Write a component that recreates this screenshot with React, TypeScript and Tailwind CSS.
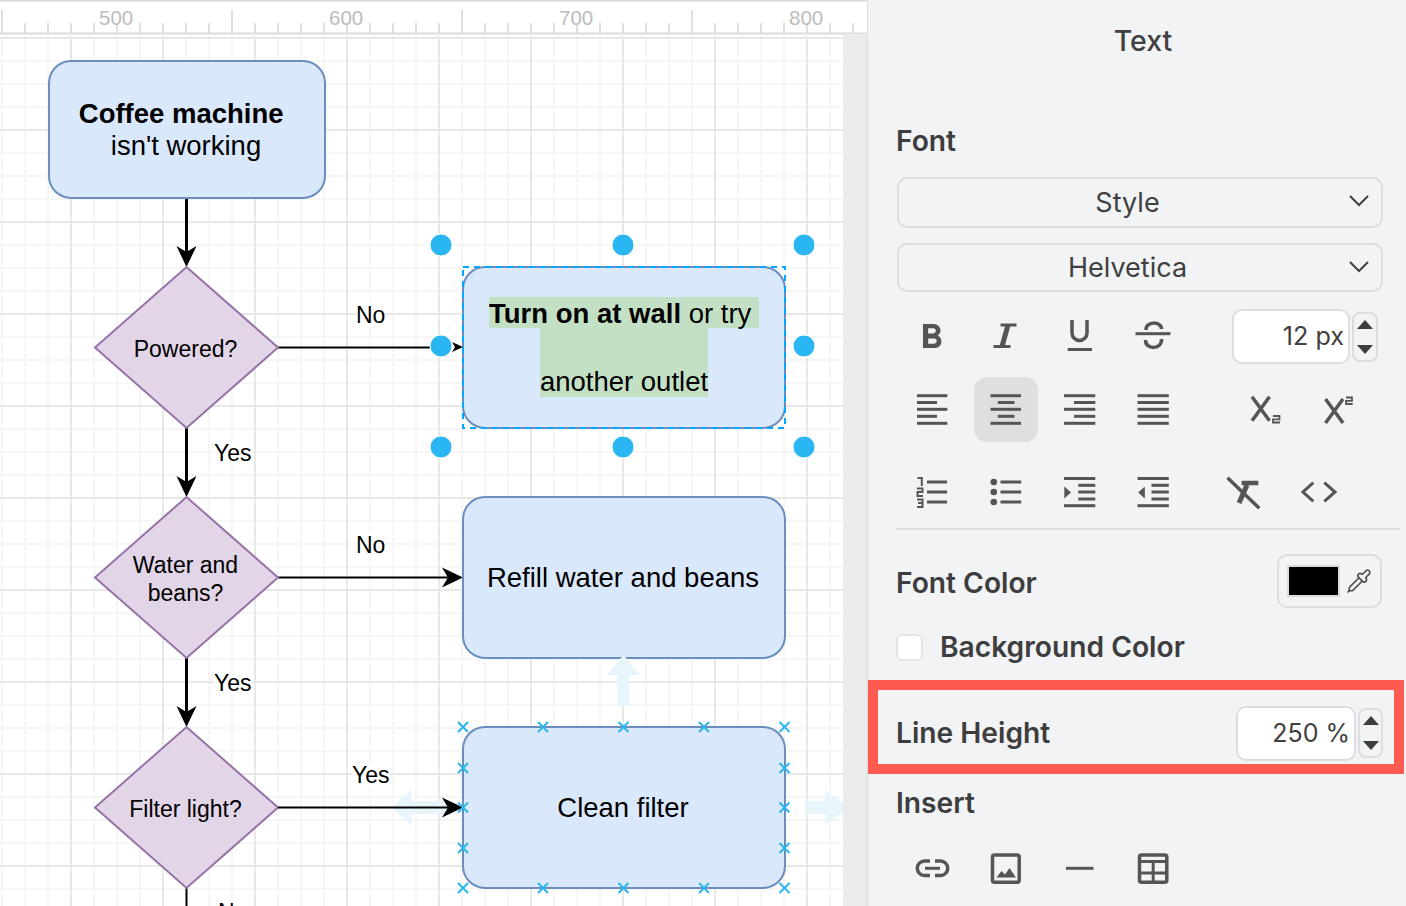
import { Pipette } from 'lucide-react';
import type { ReactNode } from 'react';

const range = (n: number) => Array.from({ length: n }, (_, i) => i);

const Grid = () => (
  <svg className="absolute left-0 top-0" width={867} height={906}>
    {range(37).map((i) => (
      <line key={i} x1={2 + i * 23} x2={2 + i * 23} y1={35} y2={906} stroke="#f6f6f6" strokeWidth={2} />
    ))}
    {range(38).map((i) => (
      <line key={i} x1={0} x2={843} y1={38 + i * 23} y2={38 + i * 23} stroke="#f6f6f6" strokeWidth={2} />
    ))}
    {range(9).map((i) => (
      <line key={i} x1={71 + i * 92} x2={71 + i * 92} y1={35} y2={906} stroke="#e8e8e8" strokeWidth={2} />
    ))}
    {range(10).map((i) => (
      <line key={i} x1={0} x2={843} y1={38 + i * 92} y2={38 + i * 92} stroke="#e8e8e8" strokeWidth={2} />
    ))}
  </svg>
);

const Ruler = () => (
  <div className="absolute left-0 top-0 h-[36px] w-[867px] bg-white">
    <svg className="absolute left-0 top-0" width={867} height={36}>
      <line x1={0} x2={867} y1={0.5} y2={0.5} stroke="#d8d8d8" strokeWidth={2} />
      <line x1={0} x2={867} y1={33.5} y2={33.5} stroke="#dcdcdc" strokeWidth={2} />
      {range(38).map((i) => {
        const x = 2 + i * 23;
        return <line key={i} x1={x} x2={x} y1={i % 10 === 0 ? 10 : 23} y2={33} stroke="#d6d6d6" strokeWidth={1.5} />;
      })}
    </svg>
    <span className="absolute left-[99px] top-[6px] text-[20.5px] leading-[24px] text-[#bdbdbd]">500</span>
    <span className="absolute left-[329px] top-[6px] text-[20.5px] leading-[24px] text-[#bdbdbd]">600</span>
    <span className="absolute left-[559px] top-[6px] text-[20.5px] leading-[24px] text-[#bdbdbd]">700</span>
    <span className="absolute left-[789px] top-[6px] text-[20.5px] leading-[24px] text-[#bdbdbd]">800</span>
  </div>
);

const Arrow = ({ x, y, dir }: { x: number; y: number; dir: 'down' | 'right' }) => (
  <path
    d="M0 0 L-21 -10 L-15 0 L-21 10 Z"
    transform={`translate(${x} ${y}) rotate(${dir === 'down' ? 90 : 0})`}
    fill="#000"
  />
);

const Edges = () => (
  <svg className="absolute left-0 top-0" width={867} height={906}>
    <g stroke="#000" strokeWidth={3}>
      <line x1={186.5} x2={186.5} y1={198} y2={255} />
      <line x1={186.5} x2={186.5} y1={428} y2={485} />
      <line x1={186.5} x2={186.5} y1={658} y2={715} />
      <line x1={186.5} x2={186.5} y1={888} y2={906} strokeWidth={2} />
      <line x1={278} x2={430} y1={347.5} y2={347.5} strokeWidth={2} />
      <line x1={278} x2={450} y1={577.5} y2={577.5} strokeWidth={2} />
    </g>
    <Arrow x={186.5} y={267} dir="down" />
    <Arrow x={186.5} y={497} dir="down" />
    <Arrow x={186.5} y={727} dir="down" />
    <Arrow x={463} y={577.5} dir="right" />
  </svg>
);

const Diamond = ({ top }: { top: number }) => (
  <polygon
    points={`186.5,${top} 278,${top + 80.5} 186.5,${top + 161} 95,${top + 80.5}`}
    fill="#e1d5e7"
    stroke="#9673a6"
    strokeWidth={2}
  />
);

const Box = ({ className, children }: { className: string; children?: ReactNode }) => (
  <div
    className={`absolute flex items-center justify-center rounded-[23px] border-2 border-[#6c8ebf] bg-[#dae8fc] text-center text-[27.5px] leading-[32px] text-black ${className}`}
  >
    {children}
  </div>
);

const Label = ({ className, children }: { className: string; children: ReactNode }) => (
  <span className={`absolute bg-white text-[23px] leading-[24px] text-black ${className}`}>{children}</span>
);

const DiamondText = ({ className, children }: { className: string; children: ReactNode }) => (
  <div className={`absolute left-[95px] w-[181px] text-center text-[23px] leading-[27.6px] text-black ${className}`}>
    {children}
  </div>
);

const crossPoints: [number, number][] = [
  ...[463, 543, 623.5, 704, 784.5].flatMap((x): [number, number][] => [
    [x, 727],
    [x, 888],
  ]),
  ...[768, 807.5, 848].flatMap((y): [number, number][] => [
    [463, y],
    [784.5, y],
  ]),
];

const Selection = () => (
  <svg className="absolute left-0 top-0" width={867} height={906}>
    {/* hover arrows round the clean filter box */}
    <g fill="#e8f6fc">
      <path d="M623.5 655 L640 675 L629.5 675 L629.5 706 L617.5 706 L617.5 675 L607 675 Z" />
      <path d="M391 807.5 L411 790 L411 801 L450 801 L450 814 L411 814 L411 825 Z" />
      <path d="M805 801 L825 801 L825 790 L843 803 L843 812 L825 825 L825 814 L805 814 Z" />
    </g>
    <line x1={278} x2={450} y1={807.5} y2={807.5} stroke="#000" strokeWidth={2} />
    <Arrow x={463} y={807.5} dir="right" />
    <path d="M452 342 L463 347 L452 352 L455 347 Z" fill="#000" />
    <rect x={463} y={267} width={322} height={161} fill="none" stroke="#00a8ff" strokeWidth={2} strokeDasharray="6 5" />
    {[441, 623, 804].flatMap((x) =>
      [245, 346, 447]
        .filter((y) => !(x === 623 && y === 346))
        .map((y) => <circle key={`${x}-${y}`} cx={x} cy={y} r={11} fill="#29b6f2" stroke="#fff" strokeWidth={1} />),
    )}
    <g stroke="#29b6f2" strokeWidth={2}>
      {crossPoints.map(([x, y]) => (
        <path key={`${x}-${y}`} d={`M${x - 5} ${y - 5} L${x + 5} ${y + 5} M${x - 5} ${y + 5} L${x + 5} ${y - 5}`} />
      ))}
    </g>
  </svg>
);

const Canvas = () => (
  <div className="relative h-[906px] w-[867px] flex-none overflow-hidden bg-white font-['Liberation_Sans',sans-serif]">
    <Grid />
    <Ruler />
    <div className="absolute left-[843px] top-[34px] h-[872px] w-[24px] bg-[#ebebeb]" />
    <Edges />
    <svg className="absolute left-0 top-0" width={867} height={906}>
      <Diamond top={267} />
      <Diamond top={497} />
      <Diamond top={727} />
    </svg>
    <Box className="left-[48px] top-[60px] h-[139px] w-[278px] pr-[2px]">
      <div>
        <b className="mr-[2px]">Coffee machine&nbsp;</b>
        <br />
        isn't working
      </div>
    </Box>
    <Box className="left-[462px] top-[266px] h-[163px] w-[324px]">
      <div className="flex flex-col items-center pb-[2px]">
        <div className="h-[31px] whitespace-pre bg-[#c3e0c4] leading-[33px]">
          <b>Turn on at wall</b> or try{' '}
        </div>
        <div className="h-[69px] bg-[#c3e0c4] pt-[38px] leading-[31px]">another outlet</div>
      </div>
    </Box>
    <Box className="left-[462px] top-[496px] h-[163px] w-[324px] pr-[2px]">Refill water and beans</Box>
    <Box className="left-[462px] top-[726px] h-[163px] w-[324px] pr-[2px]">Clean filter</Box>
    <DiamondText className="top-[336px]">Powered?</DiamondText>
    <DiamondText className="top-[552px]">
      Water and
      <br />
      beans?
    </DiamondText>
    <DiamondText className="top-[796px]">Filter light?</DiamondText>
    <Label className="left-[356px] top-[303px]">No</Label>
    <Label className="left-[214px] top-[441px]">Yes</Label>
    <Label className="left-[356px] top-[533px]">No</Label>
    <Label className="left-[214px] top-[671px]">Yes</Label>
    <Label className="left-[352px] top-[763px]">Yes</Label>
    <Label className="left-[218px] top-[900px]">No</Label>
    <Selection />
  </div>
);

const ink = '#555555';

// icons are drawn in page coordinates through the viewBox
const Icon = ({ x, y, active, children }: { x: number; y: number; active?: boolean; children: ReactNode }) => (
  <div className={`h-[65px] w-[64px] flex-none rounded-[13px] ${active ? 'bg-[#dedfe1]' : ''}`}>
    <svg width={64} height={65} viewBox={`${x} ${y} 64 65`} fill={ink} stroke="none">
      {children}
    </svg>
  </div>
);

const Bar = ({ x1, x2, y, h = 3 }: { x1: number; x2: number; y: number; h?: number }) => (
  <rect x={x1} y={y - h / 2} width={x2 - x1} height={h} />
);

const Stroke = ({ d, w = 3.5 }: { d: string; w?: number }) => <path d={d} fill="none" stroke={ink} strokeWidth={w} />;

const alignRows = [395.7, 402.5, 409.3, 416.3, 423.3];

const AlignBars = ({ x1, x2, s1, s2 }: { x1: number; x2: number; s1: number; s2: number }) => (
  <>
    {alignRows.map((y, i) => (
      <Bar key={y} x1={i % 2 ? s1 : x1} x2={i % 2 ? s2 : x2} y={y} />
    ))}
  </>
);

const Stepper = ({ className }: { className: string }) => (
  <div className={`flex flex-none flex-col items-center justify-between rounded-[8px] border-2 border-[#dcdde0] px-[4px] py-[6px] ${className}`}>
    <div className="h-0 w-0 border-x-[8px] border-b-[9px] border-x-transparent border-b-[#3d3d3d]" />
    <div className="h-0 w-0 border-x-[8px] border-t-[9px] border-x-transparent border-t-[#3d3d3d]" />
  </div>
);

const Select = ({ label, className }: { label: string; className: string }) => (
  <div className={`relative ml-[1px] flex w-[486px] items-center justify-center rounded-[10px] border-2 border-[#dcdde0] pr-[25px] pt-[2px] text-[27px] text-[#404040] ${className}`}>
    {label}
    <svg className="absolute right-[12px] top-[16px]" width={20} height={12} viewBox="0 0 20 12">
      <path d="M1 1 L10 10 L19 1" fill="none" stroke="#404040" strokeWidth={2} />
    </svg>
  </div>
);

const Heading = ({ className, children }: { className: string; children: ReactNode }) => (
  <div className={`flex h-[40px] items-center text-[28.2px] font-semibold text-[#3d3d3d] ${className}`}>{children}</div>
);

const Panel = () => (
  <div className="h-[906px] flex-1 overflow-hidden border-l border-[#dcdcdc] bg-[#f1f3f5] font-['Inter',sans-serif]">
    <div className="flex h-[80px] items-center justify-center pl-[12px] pt-[2px] text-[28.5px] font-medium text-[#404040]">Text</div>
    <div className="pl-[28px]">
      <Heading className="mt-[41px] pt-[1px]">Font</Heading>
      <Select label="Style" className="mt-[16px] h-[51px]" />
      <Select label="Helvetica" className="mt-[15px] h-[49px]" />

      <div className="mt-[12px] flex h-[65px] items-center">
        <div className="ml-[4px] flex gap-[9.5px]">
          <Icon x={900} y={304}>
            <g transform="translate(911 317.1) scale(1.714)">
              <path d="M15.6 10.79c.97-.67 1.65-1.77 1.65-2.79 0-2.26-1.75-4-4-4H7v14h7.04c2.09 0 3.71-1.7 3.71-3.79 0-1.52-.86-2.82-2.15-3.42zM10 6.5h3c.83 0 1.5.67 1.5 1.5s-.67 1.5-1.5 1.5h-3v-3zm3.5 9H10v-3h3.5c.83 0 1.5.67 1.5 1.5s-.67 1.5-1.5 1.5z" />
            </g>
          </Icon>
          <Icon x={973.5} y={304}>
            <Bar x1={1000} x2={1016} y={325} />
            <Bar x1={993} x2={1010} y={346.5} />
            <Stroke d="M1007.5 325 L1001.5 346.5" w={5} />
          </Icon>
          <Icon x={1047} y={304}>
            <Stroke d="M1072 320 V333 A7.5 7.5 0 0 0 1087 333 V320" />
            <Bar x1={1067.7} x2={1092} y={349.5} />
          </Icon>
          <Icon x={1120.5} y={304}>
            <Bar x1={1135} x2={1170} y={333.7} />
            <Stroke d="M1145.5 330 C1145 321 1161 321 1161 329" />
            <Stroke d="M1161 339 C1162 350 1144.5 350 1145 340" />
          </Icon>
        </div>
        <div className="ml-[47.5px] flex h-[55px] w-[118px] flex-none items-center justify-end rounded-[10px] border-2 border-[#dcdde0] bg-white pr-[4px] text-[25.2px] text-[#404040]">
          12 px
        </div>
        <Stepper className="ml-[2px] h-[50px] w-[26px]" />
      </div>

      <div className="mt-[8px] flex h-[65px]">
        <div className="ml-[4px] flex gap-[9.5px]">
          <Icon x={900} y={377}>
            <AlignBars x1={917} x2={947.3} s1={917} s2={937} />
          </Icon>
          <Icon x={973.5} y={377} active>
            <AlignBars x1={990} x2={1020.5} s1={997.3} s2={1014} />
          </Icon>
          <Icon x={1047} y={377}>
            <AlignBars x1={1064} x2={1095.3} s1={1074} s2={1095.3} />
          </Icon>
          <Icon x={1120.5} y={377}>
            <AlignBars x1={1137} x2={1168.3} s1={1137} s2={1168.3} />
          </Icon>
        </div>
        <div className="ml-[48.5px] flex gap-[9px]">
          <Icon x={1233} y={377}>
            <Stroke d="M1252 396.7 L1269.5 420.7 M1269.5 396.7 L1252 420.7" />
            <Stroke d="M1273 416 H1279.5 V419.3 H1273 V422.5 H1280" w={1.8} />
          </Icon>
          <Icon x={1306} y={377}>
            <Stroke d="M1325.5 399 L1343 423 M1343 399 L1325.5 423" />
            <Stroke d="M1346 397.5 H1352 V400.8 H1346 V404 H1352.7" w={1.8} />
          </Icon>
        </div>
      </div>

      <div className="mt-[18px] flex h-[65px]">
        <div className="ml-[4px] flex gap-[9.5px]">
          <Icon x={900} y={460}>
            <Stroke d="M917.5 478 H921.8 V486" w={2} />
            <Stroke d="M917 488.5 H922.5 V492 H917.5 V496 H923" w={2} />
            <Stroke d="M917 499.5 H922.5 V503 H918 M922.5 503 V507 H917" w={2} />
            <Bar x1={927} x2={947} y={482} />
            <Bar x1={927} x2={947} y={492} />
            <Bar x1={927} x2={947} y={502} />
          </Icon>
          <Icon x={973.5} y={460}>
            {[482, 492, 502].map((y) => (
              <g key={y}>
                <circle cx={993.3} cy={y} r={3.3} />
                <Bar x1={1000} x2={1020.7} y={y} />
              </g>
            ))}
          </Icon>
          <Icon x={1047} y={460}>
            <Bar x1={1064} x2={1095.3} y={478.5} />
            <Bar x1={1078.3} x2={1095.3} y={485.3} />
            <Bar x1={1078.3} x2={1095.3} y={492} />
            <Bar x1={1078.3} x2={1095.3} y={499} />
            <Bar x1={1064} x2={1095.3} y={505.7} />
            <path d="M1064.3 486.5 L1071 492.5 L1064.3 498.5 Z" />
          </Icon>
          <Icon x={1120.5} y={460}>
            <Bar x1={1137} x2={1168.3} y={478.5} />
            <Bar x1={1151} x2={1168.3} y={485.3} />
            <Bar x1={1151} x2={1168.3} y={492} />
            <Bar x1={1151} x2={1168.3} y={499} />
            <Bar x1={1137} x2={1168.3} y={505.7} />
            <path d="M1144.3 486.5 L1137.7 492.5 L1144.3 498.5 Z" />
          </Icon>
        </div>
        <div className="ml-[28.5px] flex gap-[10px]">
          <Icon x={1213} y={460}>
            <Bar x1={1241.7} x2={1258.3} y={483} h={4.5} />
            <Stroke d="M1247 485 L1239 503" w={5} />
            <Stroke d="M1227.5 477.7 L1259.3 508.3" />
          </Icon>
          <Icon x={1287} y={460}>
            <Stroke d="M1313.3 482.7 L1303 492 L1313.3 501.3" w={3} />
            <Stroke d="M1324.3 482.7 L1335 492 L1324.3 501.3" w={3} />
          </Icon>
        </div>
      </div>

      <div className="mr-[6px] mt-[3px] h-[1.5px] bg-[#dcdde0]" />

      <div className="mt-[24.5px] flex h-[54px] items-center justify-between pr-[24px]">
        <div className="pt-[5px] text-[28.2px] font-semibold text-[#3d3d3d]">Font Color</div>
        <div className="flex h-[54px] w-[105px] items-center gap-[6px] rounded-[10px] border-2 border-[#dcdde0] pl-[8px]">
          <div className="h-[32px] w-[53px] border-2 border-[#dcdcdc] bg-black" />
          <Pipette size={26} strokeWidth={1.5} color="#505050" />
        </div>
      </div>

      <div className="mt-[26px] flex h-[27px] items-center">
        <div className="h-[27px] w-[27px] rounded-[6px] border-2 border-[#e3e4e6] bg-white" />
        <div className="ml-[17px] text-[28.2px] font-semibold text-[#3d3d3d]">Background Color</div>
      </div>
    </div>

    <div className="mt-[19px] flex h-[94px] w-[536px] items-center border-[10px] border-[#ff5a4f] pl-[18px] pr-[11px] pt-[12px]">
      <div className="flex-1 pt-[1px] text-[28.2px] font-semibold text-[#3d3d3d]">Line Height</div>
      <div className="flex h-[55px] w-[120px] flex-none items-center justify-end rounded-[10px] border-2 border-[#dcdde0] bg-white pr-[4px] pt-[1px] text-[25px] text-[#404040]">
        250 %
      </div>
      <Stepper className="ml-[2px] h-[50px] w-[25px]" />
    </div>

    <div className="pl-[28px]">
      <Heading className="mt-[9px]">Insert</Heading>
      <div className="ml-[4px] mt-[13px] flex gap-[9.5px]">
        <Icon x={900} y={836}>
          <Stroke d="M930 861 H924.5 A7 7 0 0 0 924.5 875.5 H930" />
          <Stroke d="M935 861 H940.5 A7 7 0 0 1 940.5 875.5 H935" />
          <Bar x1={925} x2={940} y={868.3} />
        </Icon>
        <Icon x={973.5} y={836}>
          <rect x={992} y={855} width={26.7} height={27.3} rx={2} fill="none" stroke={ink} strokeWidth={3.5} />
          <path d="M996 877.5 L1001 871 L1004.5 874.5 L1009 868 L1015.5 877.5 Z" />
        </Icon>
        <Icon x={1047} y={836}>
          <Bar x1={1066} x2={1093.5} y={868.3} />
        </Icon>
        <Icon x={1120.5} y={836}>
          <rect x={1139} y={855} width={27.3} height={27.3} rx={2} fill="none" stroke={ink} strokeWidth={3.5} />
          <Bar x1={1139} x2={1166} y={861.5} />
          <Bar x1={1139} x2={1166} y={873} />
          <Bar x1={1151.2} x2={1154.2} y={873} h={22} />
        </Icon>
      </div>
    </div>
  </div>
);

export default function App() {
  return (
    <div className="flex h-[906px] w-[1406px] overflow-hidden">
      <Canvas />
      <Panel />
    </div>
  );
}
